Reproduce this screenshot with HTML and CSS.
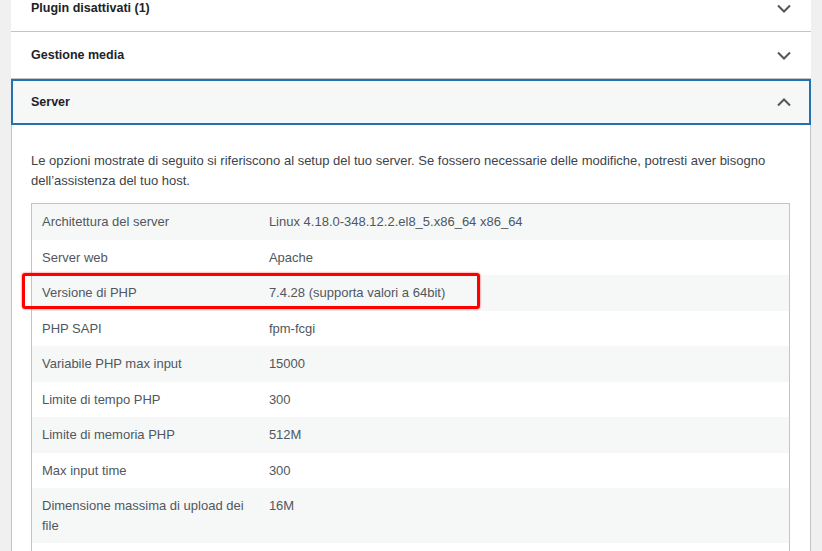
FILE: index.html
```html
<!DOCTYPE html>
<html lang="it">
<head>
<meta charset="utf-8">
<title>Salute del sito - Info</title>
<link rel="stylesheet" href="styles.css">
</head>
<body>
<div class="page">
  <div class="accordion">
    <div class="acc-heading">
      <button class="acc-trigger" type="button">
        <span class="acc-title">Plugin disattivati (1)</span>
        <svg class="chev" width="14" height="9" viewBox="0 0 14 9"><path d="M1 1.5 L7 7.5 L13 1.5" fill="none" stroke="#50575e" stroke-width="2"/></svg>
      </button>
    </div>
    <div class="acc-heading">
      <button class="acc-trigger" type="button">
        <span class="acc-title">Gestione media</span>
        <svg class="chev" width="14" height="9" viewBox="0 0 14 9"><path d="M1 1.5 L7 7.5 L13 1.5" fill="none" stroke="#50575e" stroke-width="2"/></svg>
      </button>
    </div>
    <div class="acc-heading">
      <button class="acc-trigger is-open" type="button">
        <span class="acc-title">Server</span>
        <svg class="chev" width="14" height="9" viewBox="0 0 14 9"><path d="M1 7.5 L7 1.5 L13 7.5" fill="none" stroke="#50575e" stroke-width="2"/></svg>
      </button>
    </div>
    <div class="acc-panel">
      <p class="intro">Le opzioni mostrate di seguito si riferiscono al setup del tuo server. Se fossero necessarie delle modifiche, potresti aver bisogno dell’assistenza del tuo host.</p>
      <div class="table-wrap">
        <table class="info-table">
          <tbody>
            <tr><td class="label">Architettura del server</td><td>Linux 4.18.0-348.12.2.el8_5.x86_64 x86_64</td></tr>
            <tr><td class="label">Server web</td><td>Apache</td></tr>
            <tr><td class="label">Versione di PHP</td><td>7.4.28 (supporta valori a 64bit)</td></tr>
            <tr><td class="label">PHP SAPI</td><td>fpm-fcgi</td></tr>
            <tr><td class="label">Variabile PHP max input</td><td>15000</td></tr>
            <tr><td class="label">Limite di tempo PHP</td><td>300</td></tr>
            <tr><td class="label">Limite di memoria PHP</td><td>512M</td></tr>
            <tr><td class="label">Max input time</td><td>300</td></tr>
            <tr><td class="label">Dimensione massima di upload dei file</td><td>16M</td></tr>
            <tr><td class="label">&nbsp;</td><td>&nbsp;</td></tr>
          </tbody>
        </table>
        <div class="highlight"></div>
      </div>
    </div>
  </div>
</div>
</body>
</html>
```
FILE: styles.css
```css
html, body {
  margin: 0;
  padding: 0;
  background: #f0f0f1;
  overflow: hidden;
}
body {
  font-family: "Liberation Sans", Arial, sans-serif;
  font-size: 13px;
  line-height: 1.5;
  color: #3c434a;
}
.page {
  padding-left: 11px;
  margin-top: -16px;
}
.accordion {
  width: 798px;
  background: #fff;
  border-left: 1px solid #c3c4c7;
  border-right: 1px solid #c3c4c7;
  min-height: 600px;
}
.acc-heading {
  border-top: 1px solid #c3c4c7;
}
.acc-trigger {
  display: flex;
  align-items: center;
  justify-content: space-between;
  box-sizing: border-box;
  width: calc(100% + 2px);
  margin: 0 -1px;
  height: 46px;
  padding: 0 19px 0 20px;
  border: 0;
  background: #fff;
  font-family: "Liberation Sans", Arial, sans-serif;
  font-size: 12.5px;
  font-weight: 700;
  color: #1d2327;
  text-align: left;
  cursor: pointer;
}
.acc-trigger.is-open {
  background: #f6f7f7;
  outline: 2px solid #2271b1;
  outline-offset: -2px;
}
.chev {
  display: block;
  margin-right: 1px;
}
.acc-panel {
  padding: 26px 20px 0 19px;
}
.intro {
  margin: 0 0 13px;
  color: #3c434a;
}
.table-wrap {
  position: relative;
}
.info-table {
  width: 100%;
  border-collapse: collapse;
  border: 1px solid #c3c4c7;
  color: #50575e;
  table-layout: fixed;
}
.info-table td {
  box-sizing: border-box;
  padding: 8px 10px;
  vertical-align: top;
  line-height: 19.5px;
}
.info-table td.label {
  width: 30%;
}
.info-table tr:nth-child(odd) {
  background: #f6f7f7;
}
.highlight {
  position: absolute;
  left: -9px;
  top: 70px;
  width: 452px;
  height: 30px;
  border: 3px solid #ff0000;
  border-radius: 3px;
  box-shadow: 0 0 2px rgba(255, 0, 0, 0.8);
}
```
